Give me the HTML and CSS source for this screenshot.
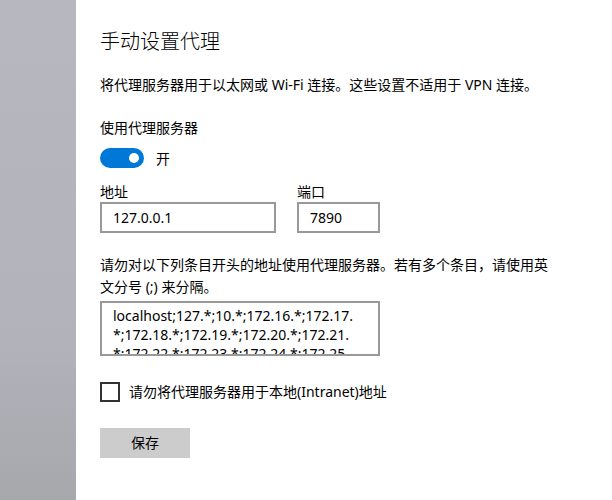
FILE: index.html
```html
<!DOCTYPE html>
<html>
<head lang="zh-CN">
    <meta charset="UTF-8">
    <title>手动设置代理</title>
    <link rel="stylesheet" href="styles.css">
</head>
<body>

<div class="page">
    <div class="side"></div>
    <div class="main">
        <h1 class="title">手动设置代理</h1>
        <p class="desc">将代理服务器用于以太网或 Wi-Fi 连接。这些设置不适用于 VPN 连接。</p>

        <div class="label">使用代理服务器</div>
        <div class="switch-row">
            <div class="switch"><span class="knob"></span></div>
            <span class="switch-text">开</span>
        </div>

        <div class="fields">
            <div class="field">
                <div class="label">地址</div>
                <div class="box box-addr">127.0.0.1</div>
            </div>
            <div class="field">
                <div class="label">端口</div>
                <div class="box box-port">7890</div>
            </div>
        </div>

        <p class="note">请勿对以下列条目开头的地址使用代理服务器。若有多个条目，请使用英文分号 (;) 来分隔。</p>
        <div class="area">
            <div>localhost;127.*;10.*;172.16.*;172.17.</div>
            <div>*;172.18.*;172.19.*;172.20.*;172.21.</div>
            <div>*;172.22.*;172.23.*;172.24.*;172.25.</div>
        </div>

        <label class="check-row">
            <span class="check"></span>
            <span>请勿将代理服务器用于本地(Intranet)地址</span>
        </label>

        <div class="btn">保存</div>
    </div>
</div>

</body>
</html>
```

FILE: styles.css
```css
* {
    padding: 0;
    margin: 0;
    box-sizing: border-box;
}
body {
    font-family: "Noto Sans", "Noto Sans CJK SC", sans-serif;
    font-size: 14px;
    color: #000;
    background-color: #fff;
}
.page {
    display: flex;
    height: 500px;
}
.side {
    width: 76px;
    flex-shrink: 0;
    background: linear-gradient(#b6b7bf, #b1b2ba 70%, #a7a8ac);
}
.main {
    padding: 28px 0 0 24px;
    width: 480px;
}
.title {
    font-size: 20px;
    font-weight: 300;
    line-height: 28px;
}
.desc {
    margin-top: 19px;
    line-height: 20px;
}
.label {
    line-height: 20px;
}
.desc + .label {
    margin-top: 23px;
}
.switch-row {
    display: flex;
    align-items: center;
    gap: 12px;
    margin-top: 10px;
    height: 20px;
}
.switch {
    width: 44px;
    height: 20px;
    border-radius: 10px;
    background-color: #0078d7;
    display: flex;
    align-items: center;
    justify-content: flex-end;
    padding-right: 5px;
}
.knob {
    width: 10px;
    height: 10px;
    border-radius: 50%;
    background-color: #fff;
}
.fields {
    display: flex;
    gap: 21px;
    margin-top: 14px;
}
.box {
    height: 31px;
    border: 2px solid #999;
    padding: 0 11px;
    line-height: 27px;
}
.box-addr {
    width: 176px;
}
.box-port {
    width: 83px;
}
.note {
    margin-top: 21px;
    line-height: 22px;
    width: 455px;
}
.area {
    margin-top: 3px;
    width: 280px;
    height: 55px;
    border: 2px solid #999;
    padding: 3px 11px 0;
    line-height: 19px;
    overflow: hidden;
    white-space: nowrap;
}
.check-row {
    display: flex;
    align-items: center;
    gap: 9px;
    margin-top: 26px;
    line-height: 20px;
}
.check {
    width: 20px;
    height: 20px;
    border: 2px solid #333;
}
.btn {
    margin-top: 26px;
    width: 90px;
    height: 30px;
    line-height: 30px;
    text-align: center;
    background-color: #ccc;
}
```
